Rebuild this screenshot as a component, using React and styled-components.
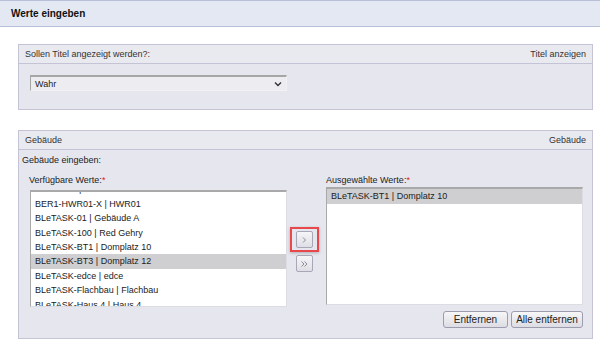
import React from "react";
import styled, { createGlobalStyle } from "styled-components";

const available = [
  "BER1-100 | 100",
  "BER1-HWR01-X | HWR01",
  "BLeTASK-01 | Gebäude A",
  "BLeTASK-100 | Red Gehry",
  "BLeTASK-BT1 | Domplatz 10",
  "BLeTASK-BT3 | Domplatz 12",
  "BLeTASK-edce | edce",
  "BLeTASK-Flachbau | Flachbau",
  "BLeTASK-Haus 4 | Haus 4",
  "BLeTASK-Haus 5 | Haus 5",
];

const selected = ["BLeTASK-BT1 | Domplatz 10"];

const Global = createGlobalStyle`
  body {
    margin: 0;
    background: #fff;
    font-family: "Liberation Sans", Arial, sans-serif;
    font-size: 9px;
    color: #222;
  }
`;

const TitleBar = styled.div`
  height: 25px;
  border-top: 1px solid #b7c0d8;
  border-bottom: 1px solid #b7c0d8;
  background: #e4e8f2;
  display: flex;
  align-items: center;
  padding-left: 11px;
  font-weight: bold;
  font-size: 10px;
  color: #111;
`;

const Content = styled.div`
  padding: 17px 7px 0 18px;
  display: flex;
  flex-direction: column;
  gap: 20px;
`;

const Panel = styled.div`
  border: 1px solid #c4c4d6;
  background: #e6e6ee;
  height: ${(p) => p.h}px;
  box-sizing: border-box;
`;

const PanelHead = styled.div`
  height: 18px;
  border-bottom: 1px solid #c4c4d6;
  background: #e9e9f0;
  display: flex;
  align-items: center;
  justify-content: space-between;
  padding: 0 6px;
  color: #333;
`;

const SelectBody = styled.div`
  padding: 11px 0 0 11px;
`;

const Select = styled.div`
  width: 257px;
  height: 16px;
  box-sizing: border-box;
  background: #ededf1;
  border-top: 2px solid #a6a6a6;
  border-left: 1px solid #a6a6a6;
  border-right: 1px solid #f2f2f5;
  border-bottom: 1px solid #f2f2f5;
  display: flex;
  align-items: center;
  justify-content: space-between;
  padding: 0 4px 0 4px;
  color: #222;
`;

const Body = styled.div`
  padding: 3px 0 0 3px;
`;

const Line = styled.div`
  height: 14px;
  line-height: 14px;
`;

const DualRow = styled.div`
  display: flex;
  margin-top: 6px;
  padding-left: 8px;
`;

const Column = styled.div`
  width: 257px;
  display: flex;
  flex-direction: column;
`;

const Label = styled.div`
  height: 14px;
  line-height: 14px;
  margin-left: ${(p) => p.ml || 0}px;
  span {
    color: #e02020;
  }
`;

const ListBox = styled.div`
  height: ${(p) => p.h}px;
  margin-top: ${(p) => p.mt}px;
  box-sizing: border-box;
  background: #fff;
  border-top: 2px solid #a9a9a9;
  border-left: 1px solid #a9a9a9;
  border-right: 1px solid #dcdce4;
  border-bottom: 1px solid #dcdce4;
  overflow: hidden;
`;

const Items = styled.div`
  margin-top: ${(p) => p.offset}px;
`;

const Item = styled.div`
  height: ${(p) => p.rh}px;
  line-height: ${(p) => p.rh}px;
  padding-left: 4px;
  white-space: nowrap;
  background: ${(p) => (p.active ? "#cfcfd1" : "transparent")};
`;

const Middle = styled.div`
  width: 39px;
  display: flex;
  flex-direction: column;
  align-items: flex-start;
  padding-top: 54px;
  padding-left: 3px;
  box-sizing: border-box;
  gap: 3px;
`;

const Highlight = styled.div`
  border: 2px solid #e8474b;
  padding: 2px 4px;
  box-shadow: 0 1px 3px rgba(0, 0, 0, 0.25);
`;

const ArrowBtn = styled.div`
  width: 17px;
  height: 17px;
  box-sizing: border-box;
  border: 1px solid #a7a7b8;
  border-radius: 2px;
  background: linear-gradient(#f6f6f8, #dedee5);
  display: flex;
  align-items: center;
  justify-content: center;
  margin-left: ${(p) => p.ml || 0}px;
`;

const Footer = styled.div`
  display: flex;
  justify-content: flex-end;
  gap: 3px;
  width: 553px;
  padding-left: 8px;
  margin-top: 4px;
`;

const Button = styled.div`
  height: 17px;
  width: ${(p) => p.w}px;
  box-sizing: border-box;
  border: 1px solid #9c9cae;
  border-radius: 3px;
  background: linear-gradient(#f7f7f9, #dcdce3);
  display: flex;
  align-items: center;
  justify-content: center;
  font-size: 10px;
  color: #222;
`;

const Chevron = ({ double }) => (
  <svg width="9" height="8" viewBox="0 0 9 8">
    {double ? (
      <>
        <path d="M1.5 1.5 L4 4 L1.5 6.5" fill="none" stroke="#8a8a98" strokeWidth="1" />
        <path d="M4.5 1.5 L7 4 L4.5 6.5" fill="none" stroke="#8a8a98" strokeWidth="1" />
      </>
    ) : (
      <path d="M3 1.5 L5.5 4 L3 6.5" fill="none" stroke="#8a8a98" strokeWidth="1" />
    )}
  </svg>
);

const Down = () => (
  <svg width="8" height="6" viewBox="0 0 8 6">
    <path d="M1 1.5 L4 4.5 L7 1.5" fill="none" stroke="#333" strokeWidth="1.4" />
  </svg>
);

export default function App() {
  return (
    <>
      <Global />
      <TitleBar>Werte eingeben</TitleBar>
      <Content>
        <Panel h={66}>
          <PanelHead>
            <span>Sollen Titel angezeigt werden?:</span>
            <span>Titel anzeigen</span>
          </PanelHead>
          <SelectBody>
            <Select>
              <span>Wahr</span>
              <Down />
            </Select>
          </SelectBody>
        </Panel>
        <Panel h={209}>
          <PanelHead>
            <span>Gebäude</span>
            <span>Gebäude</span>
          </PanelHead>
          <Body>
            <Line>Gebäude eingeben:</Line>
            <DualRow>
              <Column>
                <Label ml={-1}>
                  Verfügbare Werte:<span>*</span>
                </Label>
                <ListBox h={117} mt={3}>
                  <Items offset={-9.6}>
                    {available.map((a) => (
                      <Item key={a} rh={14.4} active={a.startsWith("BLeTASK-BT3")}>
                        {a}
                      </Item>
                    ))}
                  </Items>
                </ListBox>
              </Column>
              <Middle>
                <Highlight>
                  <ArrowBtn>
                    <Chevron />
                  </ArrowBtn>
                </Highlight>
                <ArrowBtn ml={6}>
                  <Chevron double />
                </ArrowBtn>
              </Middle>
              <Column>
                <Label>
                  Ausgewählte Werte:<span>*</span>
                </Label>
                <ListBox h={118} mt={0}>
                  <Items offset={0}>
                    {selected.map((s) => (
                      <Item key={s} rh={15} active>
                        {s}
                      </Item>
                    ))}
                  </Items>
                </ListBox>
              </Column>
            </DualRow>
            <Footer>
              <Button w={65}>Entfernen</Button>
              <Button w={72}>Alle entfernen</Button>
            </Footer>
          </Body>
        </Panel>
      </Content>
    </>
  );
}
